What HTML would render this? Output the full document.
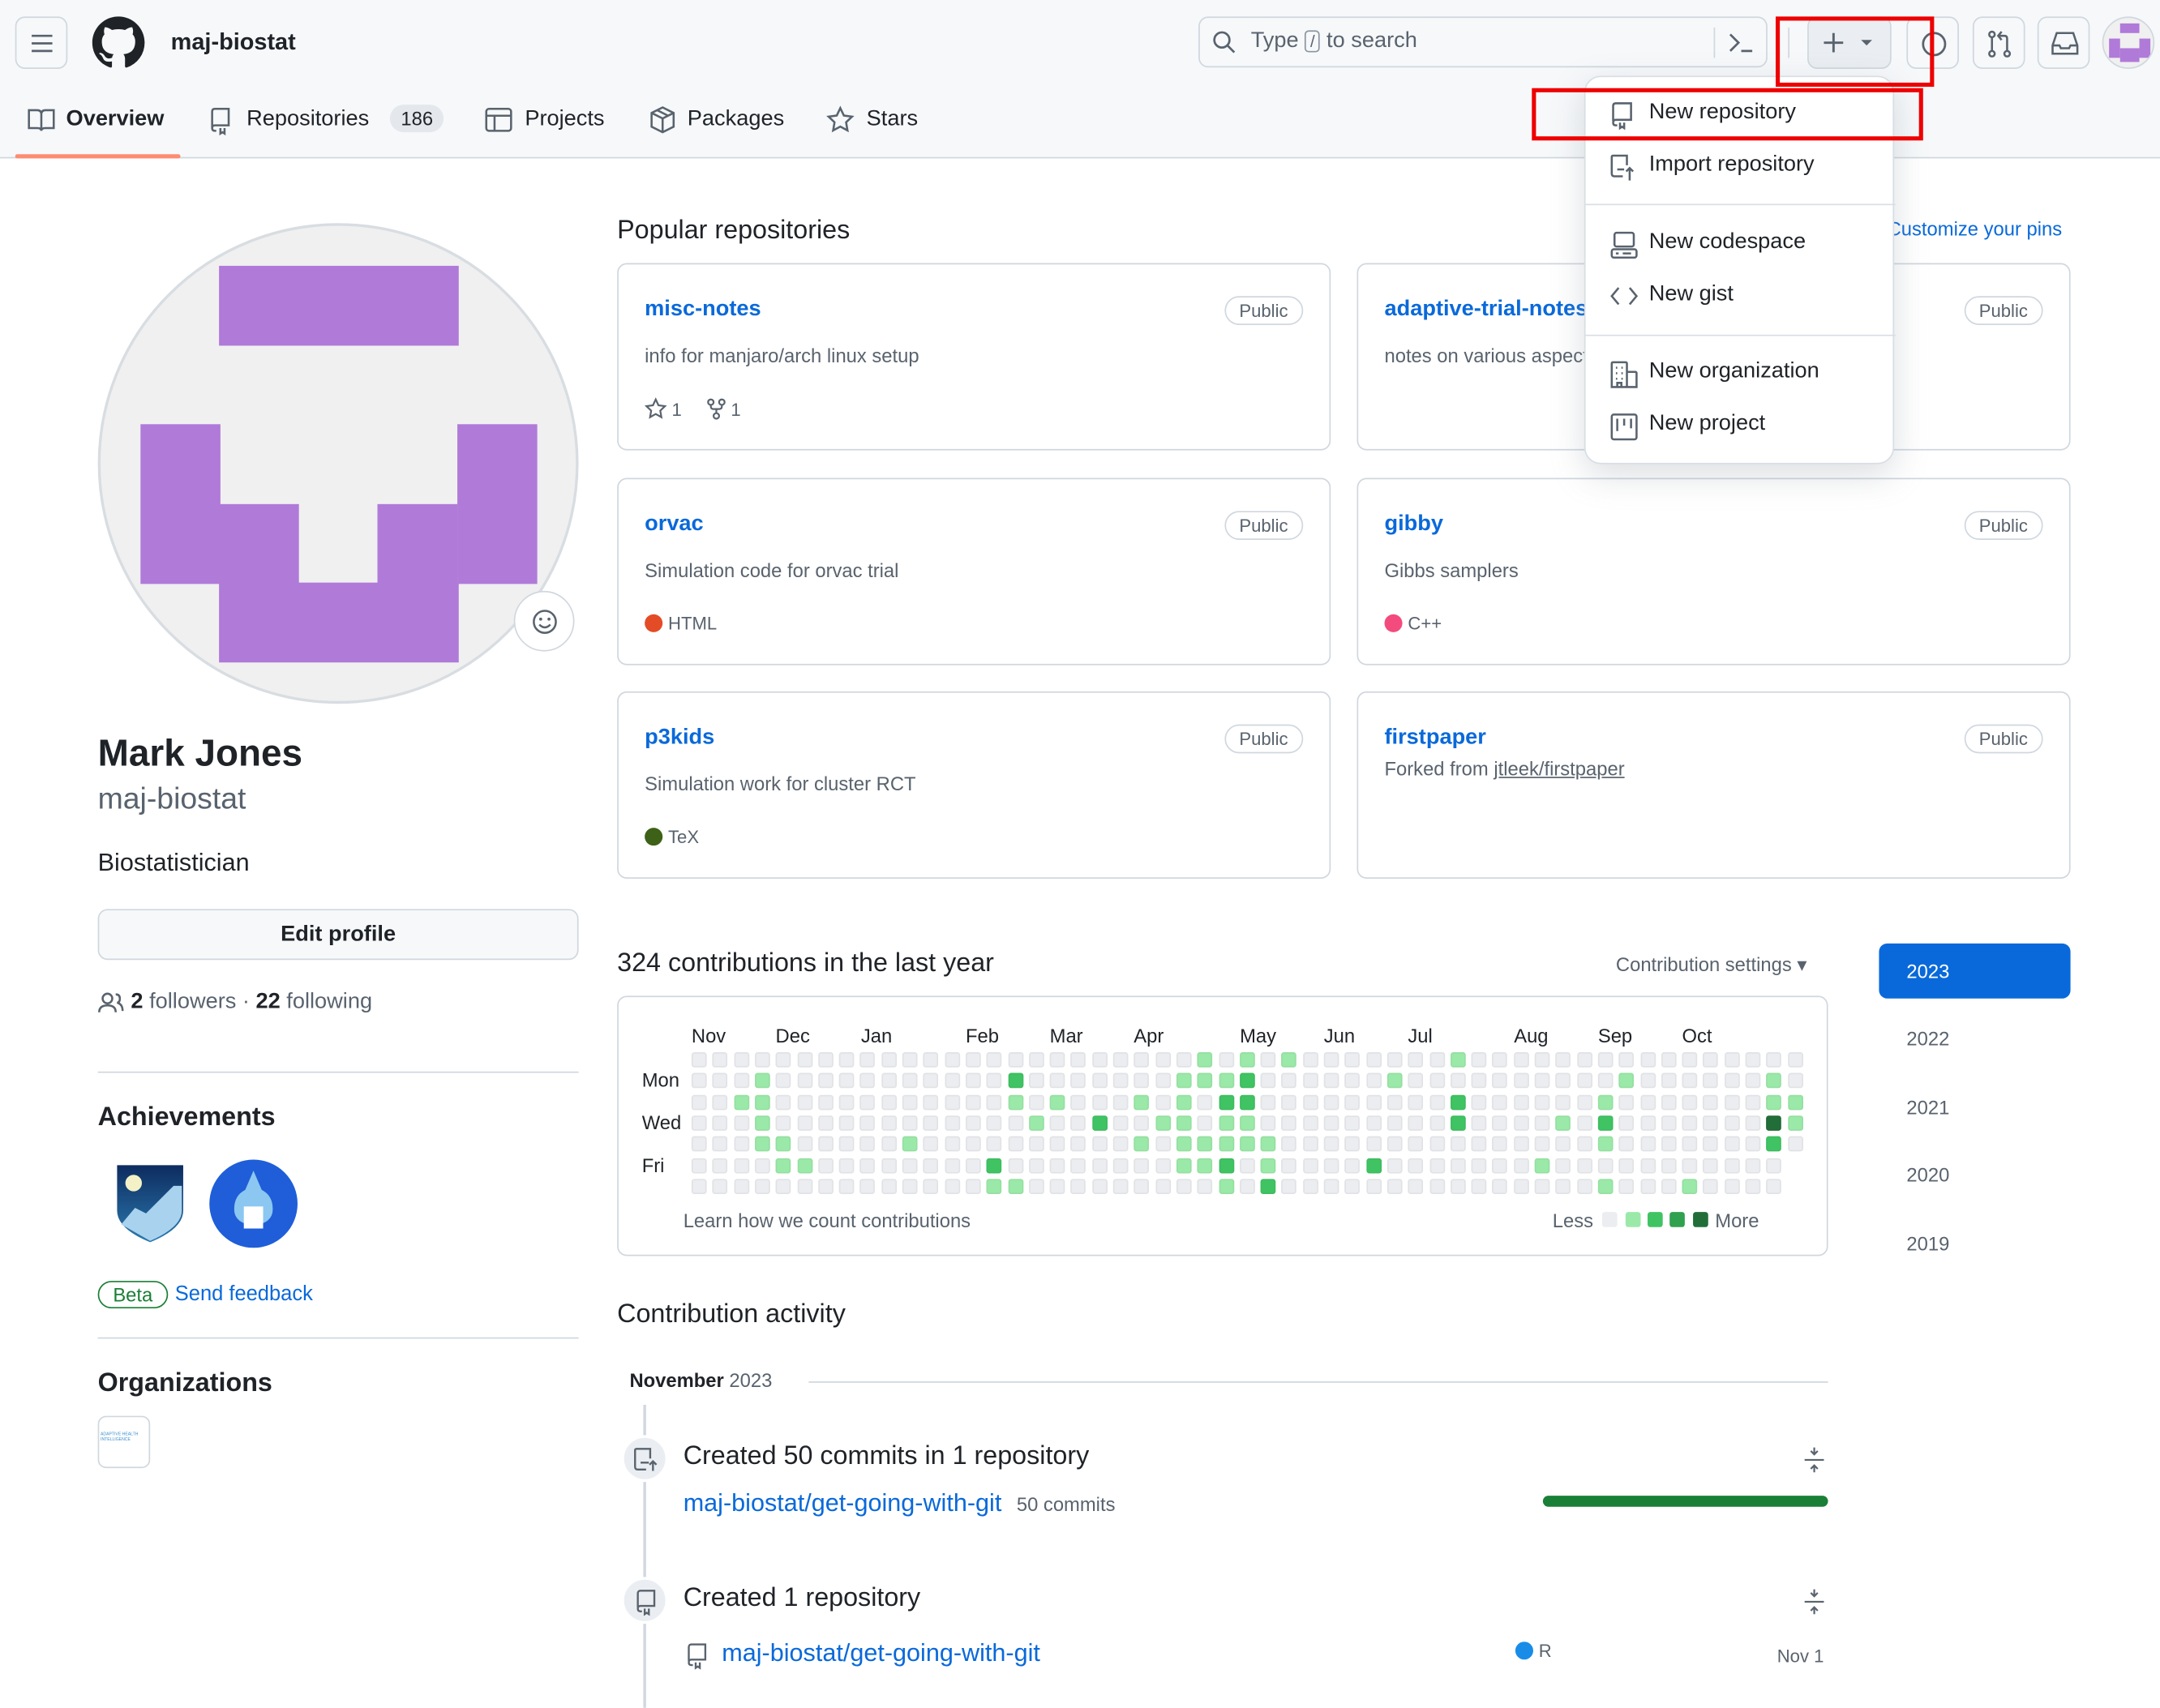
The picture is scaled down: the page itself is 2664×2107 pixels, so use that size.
<!DOCTYPE html>
<html><head><meta charset="utf-8">
<style>
*{box-sizing:border-box;margin:0;padding:0}
html,body{width:2664px;height:2106px;overflow:hidden;background:#fff}
#w{position:absolute;left:0;top:0;width:1568px;height:1240px;transform:scale(1.699);transform-origin:0 0;font-family:"Liberation Sans",Arial,sans-serif;color:#1f2328}
.a{position:absolute}
.btn{position:absolute;border:1px solid #d0d7de;border-radius:7px;background:#f6f8fa}
.lnk{color:#0969da}
.card{position:absolute;border:1px solid #d0d7de;border-radius:7px;background:#fff;width:518px;height:136px}
.card .t{position:absolute;left:19px;top:24px;font-size:16px;font-weight:bold;color:#0969da}
.card .p{position:absolute;right:19px;top:23px;border:1px solid #d0d7de;border-radius:12px;font-size:13px;color:#59636e;padding:2px 10px}
.card .d{position:absolute;left:19px;top:58px;font-size:14px;color:#59636e}
.card .m{position:absolute;left:19px;top:97px;font-size:13px;color:#59636e}
.dot{display:inline-block;width:13px;height:13px;border-radius:50%;vertical-align:-2px;margin-right:4px}
.mi{position:absolute;left:18px;font-size:16px;color:#1f2328}
.mi svg{position:absolute;left:0;top:1px}
.mi span{position:absolute;left:28px;white-space:nowrap}
.yr{position:absolute;left:1384px;font-size:14px;color:#59636e}
svg{overflow:visible}
</style></head><body><div id="w">
<div class="a" style="left:0;top:0;width:1568px;height:115px;background:#f6f8fa;border-bottom:1px solid #d0d7de"></div>
<div class="btn" style="left:11px;top:12px;width:38px;height:38px"><svg class="a" style="left:10px;top:11px" width="17" height="15"><path d="M1 2h15M1 7.5h15M1 13h15" stroke="#59636e" stroke-width="1.6"/></svg></div>
<svg class="a" style="left:67px;top:12px" width="38" height="38" viewBox="0 0 16 16"><path fill="#1f2328" d="M8 0C3.58 0 0 3.58 0 8c0 3.54 2.29 6.53 5.47 7.59.4.07.55-.17.55-.38 0-.19-.01-.82-.01-1.49-2.01.37-2.530-.49-2.69-.94-.09-.23-.48-.94-.82-1.13-.28-.15-.68-.52-.01-.53.63-.01 1.08.58 1.23.82.72 1.21 1.87.87 2.33.66.07-.52.28-.87.51-1.070-1.78-.2-3.640-.89-3.64-3.95 0-.87.31-1.59.82-2.15-.08-.2-.36-1.02.08-2.12 0 0 .67-.21 2.2.82.64-.18 1.32-.27 2-.27.68 0 1.36.09 2 .27 1.53-1.04 2.2-.82 2.2-.82.44 1.1.16 1.92.08 2.12.51.56.82 1.27.82 2.15 0 3.07-1.87 3.75-3.65 3.95.29.25.54.73.54 1.48 0 1.07-.01 1.93-.01 2.2 0 .21.15.46.55.38A8.013 8.013 0 0016 8c0-4.42-3.58-8-8-8z"/></svg>
<div class="a" style="left:124px;top:21px;font-size:17px;font-weight:bold">maj-biostat</div>
<div class="btn" style="left:870px;top:12px;width:413px;height:37px;background:#f6f8fa"></div>
<svg class="a" style="left:880px;top:22px" width="18" height="18"><circle cx="7" cy="7" r="5.5" stroke="#59636e" stroke-width="1.6" fill="none"/><path d="M11 11l5 5" stroke="#59636e" stroke-width="1.6"/></svg>
<div class="a" style="left:908px;top:21px;font-size:16px;color:#59636e">Type <span style="border:1px solid #8c959f;border-radius:3px;font-size:12px;padding:0 3px">/</span> to search</div>
<div class="a" style="left:1244px;top:20px;width:1px;height:22px;background:#d0d7de"></div>
<svg class="a" style="left:1254px;top:22px" width="20" height="18"><path d="M2 3l6 6-6 6M10 15h8" stroke="#59636e" stroke-width="1.6" fill="none"/></svg>
<div class="a" style="left:1298px;top:20px;width:1px;height:22px;background:#d0d7de"></div>
<div class="btn" style="left:1312px;top:12px;width:61px;height:38px;background:#eaeef2"><svg class="a" style="left:10px;top:10px" width="36" height="16"><path d="M8 1v14M1 8h14" stroke="#59636e" stroke-width="1.7"/><path d="M28 6h8l-4 4z" fill="#59636e"/></svg></div>
<div class="btn" style="left:1384px;top:12px;width:38px;height:38px"><svg class="a" style="left:9px;top:9px" width="20" height="20"><circle cx="10" cy="10" r="8" stroke="#59636e" stroke-width="1.6" fill="none"/></svg></div>
<div class="btn" style="left:1432px;top:12px;width:38px;height:38px"><svg class="a" style="left:10px;top:9px" width="18" height="20"><circle cx="3" cy="3" r="2" stroke="#59636e" stroke-width="1.5" fill="none"/><circle cx="3" cy="17" r="2" stroke="#59636e" stroke-width="1.5" fill="none"/><circle cx="14" cy="17" r="2" stroke="#59636e" stroke-width="1.5" fill="none"/><path d="M3 5v10M14 15V6q0-2-2-2H8M10 1L7.5 4 10 7" stroke="#59636e" stroke-width="1.5" fill="none"/></svg></div>
<div class="btn" style="left:1479px;top:12px;width:38px;height:38px"><svg class="a" style="left:9px;top:10px" width="20" height="18"><path d="M1 10l3-9h12l3 9v6H1zM1 10h5l1 2h6l1-2h5" stroke="#59636e" stroke-width="1.5" fill="none"/></svg></div>
<div class="a" style="left:1526px;top:12px;width:38px;height:38px;border-radius:50%;background:#f0f0f0;border:1px solid #d0d7de;overflow:hidden"><div class="a" style="left:12px;top:4px;width:14px;height:7px;background:#b07ad9"></div><div class="a" style="left:4px;top:15px;width:8px;height:14px;background:#b07ad9"></div><div class="a" style="left:26px;top:15px;width:8px;height:14px;background:#b07ad9"></div><div class="a" style="left:12px;top:22px;width:14px;height:10px;background:#b07ad9"></div></div>

<svg class="a" style="left:20px;top:78px" width="20" height="18"><path d="M1 2h6q3 0 3 3v12q0-2-3-2H1zM19 2h-6q-3 0-3 3v12q0-2 3-2h6z" stroke="#59636e" stroke-width="1.5" fill="none"/></svg>
<div class="a" style="left:48px;top:78px;font-size:16px;font-weight:bold">Overview</div>
<div class="a" style="left:11px;top:112px;width:120px;height:3px;background:#fd8c73;border-radius:2px"></div>
<svg class="a" style="left:152px;top:78px" width="16" height="19"><path d="M2 15V3q0-2 2-2h10v12H4q-2 0-2 2 0 2 2 2h1M8 15v4l1.5-1 1.5 1v-4" stroke="#59636e" stroke-width="1.5" fill="none"/></svg>
<div class="a" style="left:179px;top:78px;font-size:16px">Repositories</div>
<div class="a" style="left:283px;top:76px;background:#e4e8ec;border-radius:12px;font-size:14px;padding:2px 8px">186</div>
<svg class="a" style="left:352px;top:78px" width="20" height="18"><rect x="1" y="1" width="18" height="16" rx="2" stroke="#59636e" stroke-width="1.5" fill="none"/><path d="M1 6h18M7 6v11" stroke="#59636e" stroke-width="1.5"/></svg>
<div class="a" style="left:381px;top:78px;font-size:16px">Projects</div>
<svg class="a" style="left:471px;top:77px" width="20" height="20"><path d="M10 1l8 4v10l-8 4-8-4V5zM2 5l8 4 8-4M10 9v10M6 3l8 4" stroke="#59636e" stroke-width="1.5" fill="none"/></svg>
<div class="a" style="left:499px;top:78px;font-size:16px">Packages</div>
<svg class="a" style="left:600px;top:77px" width="20" height="20"><path d="M10 1.5l2.6 5.4 5.9.8-4.3 4.1 1 5.9L10 14.9l-5.2 2.8 1-5.9L1.5 7.7l5.9-.8z" stroke="#59636e" stroke-width="1.5" fill="none"/></svg>
<div class="a" style="left:629px;top:78px;font-size:16px">Stars</div>

<div class="a" style="left:71px;top:162px;width:349px;height:349px;border-radius:50%;background:#f0f0f0;border:2px solid #d8dde2;overflow:hidden">
<div class="a" style="left:86px;top:29px;width:174px;height:58px;background:#b07ad9"></div>
<div class="a" style="left:29px;top:144px;width:58px;height:116px;background:#b07ad9"></div>
<div class="a" style="left:259px;top:144px;width:58px;height:116px;background:#b07ad9"></div>
<div class="a" style="left:201px;top:202px;width:58px;height:58px;background:#b07ad9"></div>
<div class="a" style="left:86px;top:202px;width:58px;height:58px;background:#b07ad9"></div>
<div class="a" style="left:86px;top:259px;width:174px;height:58px;background:#b07ad9"></div>
</div>
<div class="a" style="left:373px;top:429px;width:44px;height:44px;border-radius:50%;background:#fff;border:1px solid #d0d7de"><svg class="a" style="left:12px;top:12px" width="19" height="19"><circle cx="9.5" cy="9.5" r="8" stroke="#59636e" stroke-width="1.5" fill="none"/><circle cx="6.5" cy="7.5" r="1.1" fill="#59636e"/><circle cx="12.5" cy="7.5" r="1.1" fill="#59636e"/><path d="M5.5 11.5q4 4 8 0" stroke="#59636e" stroke-width="1.5" fill="none"/></svg></div>
<div class="a" style="left:71px;top:532px;font-size:27px;font-weight:bold">Mark Jones</div>
<div class="a" style="left:71px;top:567px;font-size:22px;color:#59636e">maj-biostat</div>
<div class="a" style="left:71px;top:616px;font-size:18px">Biostatistician</div>
<div class="btn" style="left:71px;top:660px;width:349px;height:37px;text-align:center;font-size:16px;font-weight:bold;line-height:35px">Edit profile</div>
<svg class="a" style="left:71px;top:720px" width="20" height="16"><circle cx="7" cy="5" r="3.5" stroke="#59636e" stroke-width="1.5" fill="none"/><path d="M1 15q0-5 6-5t6 5M13 2q3 0 3 3t-2 3q4 1 4 6" stroke="#59636e" stroke-width="1.5" fill="none"/></svg>
<div class="a" style="left:95px;top:719px;font-size:16px;color:#59636e"><b style="color:#1f2328">2</b> followers · <b style="color:#1f2328">22</b> following</div>
<div class="a" style="left:71px;top:778px;width:349px;height:1px;background:#d0d7de"></div>
<div class="a" style="left:71px;top:801px;font-size:19px;font-weight:bold">Achievements</div>
<svg class="a" style="left:82px;top:843px" width="54" height="62"><defs><linearGradient id="g1" x1="0" y1="0" x2="0" y2="1"><stop offset="0" stop-color="#0d2a5e"/><stop offset="1" stop-color="#2b7bb0"/></linearGradient></defs><path d="M2 2h50v34q0 14-25 24Q2 50 2 36z" fill="url(#g1)" stroke="#fff" stroke-width="2"/><circle cx="15" cy="16" r="6" fill="#f4f1c6"/><path d="M6 46l10-12 8 4 20-20 6 0v18q0 12-23 22z" fill="#a9d2ef"/></svg>
<svg class="a" style="left:150px;top:840px" width="68" height="68"><circle cx="34" cy="34" r="33" fill="#1f5ed8" stroke="#fff" stroke-width="2"/><path d="M34 10l6 14q8 4 8 14t-14 12q-14-2-14-12t8-14z" fill="#8bc7f0"/><rect x="27" y="36" width="14" height="16" fill="#fff"/></svg>
<div class="a" style="left:71px;top:930px;border:1px solid #1a7f37;color:#1a7f37;border-radius:12px;font-size:14px;padding:1px 10px">Beta</div>
<div class="a lnk" style="left:127px;top:931px;font-size:15px">Send feedback</div>
<div class="a" style="left:71px;top:971px;width:349px;height:1px;background:#d0d7de"></div>
<div class="a" style="left:71px;top:994px;font-size:19px;font-weight:bold">Organizations</div>
<div class="a" style="left:71px;top:1028px;width:38px;height:38px;border:1px solid #d0d7de;border-radius:6px;background:#fff;font-size:3px;color:#3a8fd1;padding:10px 1px">ADAPTIVE HEALTH INTELLIGENCE</div>

<div class="a" style="left:448px;top:157px;font-size:19px">Popular repositories</div>
<div class="a lnk" style="left:1370px;top:158px;font-size:14px">Customize your pins</div>
<div class="card" style="left:448px;top:191px"><div class="t">misc-notes</div><div class="p">Public</div><div class="d">info for manjaro/arch linux setup</div><div class="m"><svg width="16" height="16" style="vertical-align:-3px"><path d="M8 1l2 4.3 4.7.6-3.4 3.3.8 4.7L8 11.6l-4.1 2.3.8-4.7L1.3 5.9 6 5.3z" stroke="#59636e" stroke-width="1.3" fill="none"/></svg> 1 &nbsp;&nbsp;&nbsp;&nbsp;<svg width="14" height="16" style="vertical-align:-3px"><circle cx="3" cy="3" r="2" stroke="#59636e" stroke-width="1.3" fill="none"/><circle cx="11" cy="3" r="2" stroke="#59636e" stroke-width="1.3" fill="none"/><circle cx="7" cy="13" r="2" stroke="#59636e" stroke-width="1.3" fill="none"/><path d="M3 5v1q0 2 2 2h4q2 0 2-2V5M7 8v3" stroke="#59636e" stroke-width="1.3" fill="none"/></svg> 1</div></div>
<div class="card" style="left:985px;top:191px"><div class="t">adaptive-trial-notes</div><div class="p">Public</div><div class="d">notes on various aspects</div></div>
<div class="card" style="left:448px;top:347px"><div class="t">orvac</div><div class="p">Public</div><div class="d">Simulation code for orvac trial</div><div class="m"><span class="dot" style="background:#e34c26"></span>HTML</div></div>
<div class="card" style="left:985px;top:347px"><div class="t">gibby</div><div class="p">Public</div><div class="d">Gibbs samplers</div><div class="m"><span class="dot" style="background:#f34b7d"></span>C++</div></div>
<div class="card" style="left:448px;top:502px"><div class="t">p3kids</div><div class="p">Public</div><div class="d">Simulation work for cluster RCT</div><div class="m"><span class="dot" style="background:#3d6117"></span>TeX</div></div>
<div class="card" style="left:985px;top:502px"><div class="t">firstpaper</div><div class="p">Public</div><div class="d" style="top:47px">Forked from <u>jtleek/firstpaper</u></div></div>

<div class="a" style="left:448px;top:689px;font-size:19px">324 contributions in the last year</div>
<div class="a" style="left:1173px;top:692px;font-size:14px;color:#59636e">Contribution settings ▾</div>
<div class="a" style="left:448px;top:723px;width:879px;height:189px;border:1px solid #d0d7de;border-radius:7px"></div>
<div class="a" style="left:0;top:744px;font-size:14px">
<span class="a" style="left:502px">Nov</span><span class="a" style="left:563px">Dec</span><span class="a" style="left:625px">Jan</span><span class="a" style="left:701px">Feb</span><span class="a" style="left:762px">Mar</span><span class="a" style="left:823px">Apr</span><span class="a" style="left:900px">May</span><span class="a" style="left:961px">Jun</span><span class="a" style="left:1022px">Jul</span><span class="a" style="left:1099px">Aug</span><span class="a" style="left:1160px">Sep</span><span class="a" style="left:1221px">Oct</span></div>
<div class="a" style="left:466px;top:776px;font-size:14px">Mon</div>
<div class="a" style="left:466px;top:807px;font-size:14px">Wed</div>
<div class="a" style="left:466px;top:838px;font-size:14px">Fri</div>
<div id="grid"></div>
<div class="a" style="left:496px;top:878px;font-size:14px;color:#59636e">Learn how we count contributions</div>
<div class="a" style="left:1127px;top:878px;font-size:14px;color:#59636e">Less</div>
<div class="a" style="left:1163px;top:880px;width:11px;height:11px;border-radius:2px;background:#ebedf0"></div>
<div class="a" style="left:1180px;top:880px;width:11px;height:11px;border-radius:2px;background:#9be9a8"></div>
<div class="a" style="left:1196px;top:880px;width:11px;height:11px;border-radius:2px;background:#40c463"></div>
<div class="a" style="left:1212px;top:880px;width:11px;height:11px;border-radius:2px;background:#30a14e"></div>
<div class="a" style="left:1229px;top:880px;width:11px;height:11px;border-radius:2px;background:#216e39"></div>
<div class="a" style="left:1245px;top:878px;font-size:14px;color:#59636e">More</div>

<div class="a" style="left:1364px;top:685px;width:139px;height:40px;background:#0969da;border-radius:6px;color:#fff;font-size:14px;line-height:40px;padding-left:20px">2023</div>
<div class="yr" style="top:746px">2022</div><div class="yr" style="top:796px">2021</div><div class="yr" style="top:845px">2020</div><div class="yr" style="top:895px">2019</div>

<div class="a" style="left:448px;top:944px;font-size:19px">Contribution activity</div>
<div class="a" style="left:457px;top:994px;font-size:14px;font-weight:bold">November <span style="color:#59636e;font-weight:normal">2023</span></div>
<div class="a" style="left:587px;top:1003px;width:740px;height:1px;background:#d0d7de"></div>
<div class="a" style="left:467px;top:1020px;width:2px;height:220px;background:#d0d7de"></div>
<div class="a" style="left:451px;top:1042px;width:34px;height:34px;border-radius:50%;background:#eaeef2;border:2px solid #fff"><svg class="a" style="left:7px;top:7px" width="18" height="18"><path d="M9 16H3q-2 0-2-2V2q0-1 1-1h10v7M5 11h6M14 17v-7M11.5 12.5L14 10l2.5 2.5" stroke="#59636e" stroke-width="1.4" fill="none"/></svg></div>
<div class="a" style="left:496px;top:1047px;font-size:19px">Created 50 commits in 1 repository</div>
<svg class="a" style="left:1309px;top:1050px" width="16" height="20"><path d="M8 1v5M5.5 3.5L8 6l2.5-2.5M8 19v-5M5.5 16.5L8 14l2.5 2.5M1 10h14" stroke="#59636e" stroke-width="1.3" fill="none"/></svg>
<div class="a lnk" style="left:496px;top:1081px;font-size:18px">maj-biostat/get-going-with-git</div>
<div class="a" style="left:738px;top:1084px;font-size:14px;color:#59636e">50 commits</div>
<div class="a" style="left:1120px;top:1086px;width:207px;height:8px;border-radius:4px;background:#1a7f37"></div>
<div class="a" style="left:451px;top:1145px;width:34px;height:34px;border-radius:50%;background:#eaeef2;border:2px solid #fff"><svg class="a" style="left:8px;top:7px" width="16" height="19"><path d="M2 13V3q0-2 2-2h10v11H4q-2 0-2 2 0 2 2 2h1M7 14v4l1.5-1 1.5 1v-4" stroke="#59636e" stroke-width="1.4" fill="none"/></svg></div>
<div class="a" style="left:496px;top:1150px;font-size:19px">Created 1 repository</div>
<svg class="a" style="left:1309px;top:1153px" width="16" height="20"><path d="M8 1v5M5.5 3.5L8 6l2.5-2.5M8 19v-5M5.5 16.5L8 14l2.5 2.5M1 10h14" stroke="#59636e" stroke-width="1.3" fill="none"/></svg>
<svg class="a" style="left:498px;top:1193px" width="16" height="19"><path d="M2 13V3q0-2 2-2h10v11H4q-2 0-2 2 0 2 2 2h1M7 14v4l1.5-1 1.5 1v-4" stroke="#59636e" stroke-width="1.4" fill="none"/></svg>
<div class="a lnk" style="left:524px;top:1190px;font-size:18px">maj-biostat/get-going-with-git</div>
<div class="a" style="left:1100px;top:1191px;font-size:13px;color:#59636e"><span class="dot" style="background:#198ce7"></span>R</div>
<div class="a" style="left:1290px;top:1195px;font-size:13px;color:#59636e">Nov 1</div>

<div class="a" style="left:1150px;top:55px;width:225px;height:282px;background:#fff;border:1px solid #d8dee4;border-radius:12px;box-shadow:0 8px 24px rgba(140,149,159,.3)">
<div class="mi" style="top:17px"><svg width="18" height="19"><path d="M2 14V3q0-2 2-2h11v12H4q-2 0-2 2 0 2 2 2h1M7 15v4l1.5-1 1.5 1v-4" stroke="#59636e" stroke-width="1.5" fill="none"/></svg><span>New repository</span></div>
<div class="mi" style="top:55px"><svg width="18" height="20"><path d="M9 16H3q-2 0-2-2V2q0-1 1-1h10v7M5 11h5M14 19v-9M11.5 12.5L14 10l2.5 2.5" stroke="#59636e" stroke-width="1.5" fill="none"/></svg><span>Import repository</span></div>
<div class="a" style="left:0;top:92px;width:225px;height:1px;background:#d8dee4"></div>
<div class="mi" style="top:111px"><svg width="20" height="20"><rect x="3" y="1" width="14" height="10" rx="1.5" stroke="#59636e" stroke-width="1.5" fill="none"/><rect x="1" y="13" width="18" height="6" rx="1.5" stroke="#59636e" stroke-width="1.5" fill="none"/><path d="M4 16h2M9 16h6" stroke="#59636e" stroke-width="1.5"/></svg><span>New codespace</span></div>
<div class="mi" style="top:149px"><svg width="20" height="18"><path d="M6 3L1 9l5 6M14 3l5 6-5 6" stroke="#59636e" stroke-width="1.5" fill="none"/></svg><span>New gist</span></div>
<div class="a" style="left:0;top:187px;width:225px;height:1px;background:#d8dee4"></div>
<div class="mi" style="top:205px"><svg width="20" height="20"><path d="M1 19V2q0-1 1-1h9q1 0 1 1v17H1zM12 8h6q1 0 1 1v10h-7M4 5h1M8 5h1M4 9h1M8 9h1M4 13h1M8 13h1M5 19v-3h3v3" stroke="#59636e" stroke-width="1.5" fill="none"/></svg><span>New organization</span></div>
<div class="mi" style="top:243px"><svg width="20" height="20"><rect x="1" y="1" width="18" height="18" rx="1.5" stroke="#59636e" stroke-width="1.5" fill="none"/><path d="M5 4v9M10 4v5M15 4v7" stroke="#59636e" stroke-width="1.5"/></svg><span>New project</span></div>
</div>
<div class="a" style="left:1289px;top:12px;width:115px;height:51px;border:3px solid #e00"></div>
<div class="a" style="left:1112px;top:64px;width:284px;height:38px;border:3px solid #e00"></div>
</div>
<script>
var L={'0':[24,26,28,36],'1':[3,23,24,25,33,44,51],'2':[2,3,15,17,21,23,43,51,52],'3':[3,16,22,23,25,26,41,52],'4':[3,4,10,21,23,24,25,26,27,43],'5':[4,5,23,24,27,40],'6':[14,15,25,43,47]};
var M={'1':[15,26],'2':[25,26,36],'3':[19,36,43],'4':[51],'5':[14,25,32],'6':[27]};
var D={'3':[51]};
var h='';
for(var r=0;r<7;r++)for(var c=0;c<53;c++){
 if(c==52&&r>4)continue;
 var col='#ebedf0';
 if(L[r]&&L[r].indexOf(c)>=0)col='#9be9a8';
 if(M[r]&&M[r].indexOf(c)>=0)col='#40c463';
 if(D[r]&&D[r].indexOf(c)>=0)col='#216e39';
 h+='<div class="a" style="left:'+(502+c*15.3).toFixed(1)+'px;top:'+(764+r*15.3).toFixed(1)+'px;width:11px;height:11px;border-radius:2px;background:'+col+';outline:1px solid rgba(31,35,40,.05);outline-offset:-1px"></div>';
}
document.getElementById('grid').innerHTML=h;
</script>
</body></html>
